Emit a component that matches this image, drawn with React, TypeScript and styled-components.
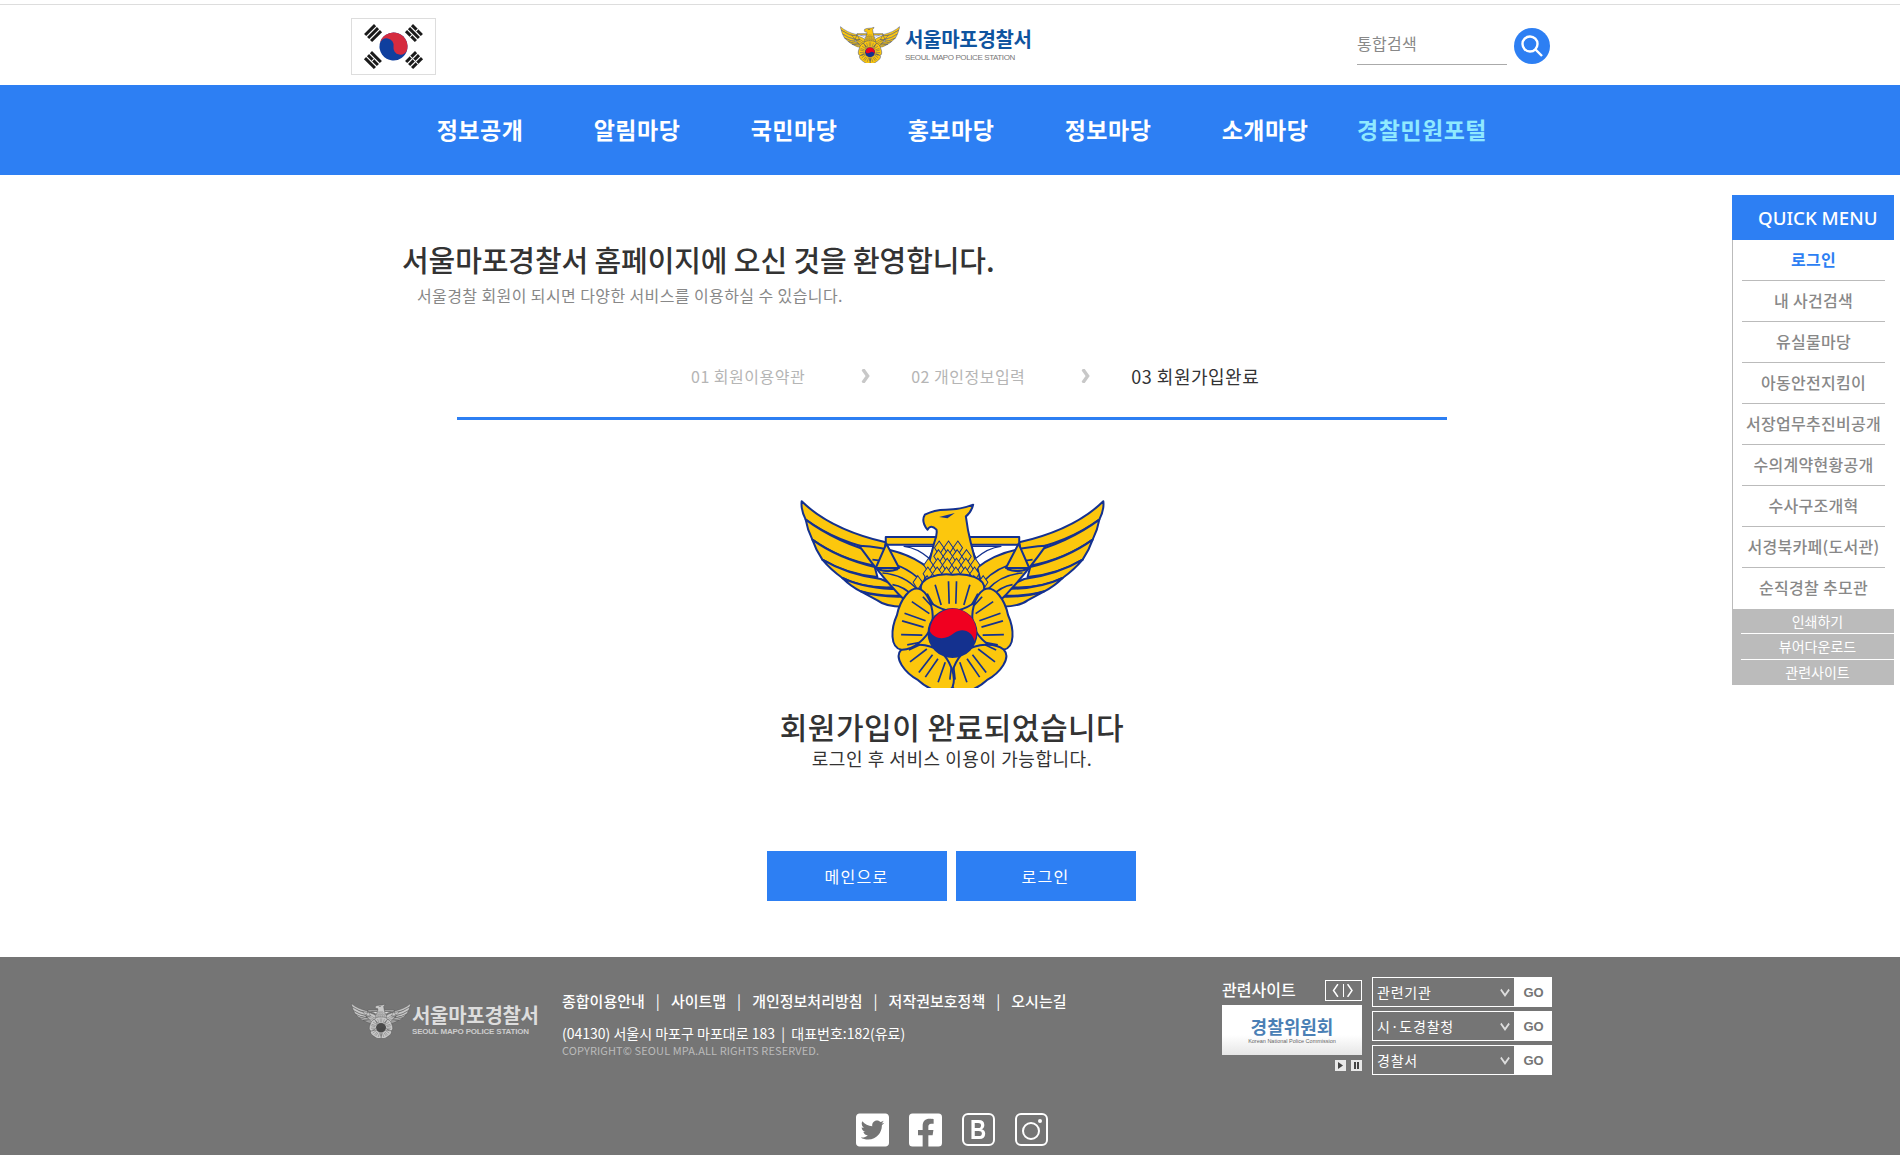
import styled, { createGlobalStyle } from 'styled-components'
import { FaTwitterSquare, FaFacebookSquare } from 'react-icons/fa'

const BLUE = '#2d7ff3'
const KR = `'Noto Sans CJK KR', 'Noto Sans', sans-serif`

const GlobalStyle = createGlobalStyle`
  html, body {
    margin: 0;
    padding: 0;
    background: #fff;
    font-family: ${KR};
  }
  * { box-sizing: border-box; }
`

const Page = styled.div`
  position: relative;
  width: 1900px;
  height: 1155px;
  overflow: hidden;
`

const Header = styled.header`
  display: flex;
  height: 85px;
  padding: 18px 0 0 351px;
  background: linear-gradient(#fff 4px, #ddd 4px, #ddd 5px, #fff 5px);
`

const FlagBox = styled.div`
  width: 85px;
  height: 57px;
  border: 1px solid #ddd;
  background: #fff;
  display: flex;
  align-items: center;
  justify-content: center;
`

const Logo = styled.div`
  display: flex;
  align-items: flex-start;
  margin: 8px 0 0 404px;
  width: 200px;
`

const LogoText = styled.div`
  margin-left: 5px;
  display: flex;
  flex-direction: column;
`

const LogoTitle = styled.span`
  font-size: 20px;
  line-height: 26px;
  font-weight: 700;
  letter-spacing: -0.3px;
  color: #0f549f;
  white-space: nowrap;
`

const LogoSub = styled.span`
  font-family: 'Liberation Sans', sans-serif;
  font-size: 8px;
  line-height: 10px;
  margin-top: 1px;
  letter-spacing: -0.4px;
  color: #777;
  white-space: nowrap;
`

const Search = styled.div`
  display: flex;
  align-items: flex-start;
  margin: 10px 0 0 317px;
`

const SearchInput = styled.input`
  width: 150px;
  height: 37px;
  padding: 0 0 6px;
  border: 0;
  border-bottom: 1px solid #aaa;
  outline: 0;
  background: transparent;
  font-family: ${KR};
  font-size: 16px;
  letter-spacing: 0.3px;
  color: #888;
  &::placeholder { color: #888; opacity: 1; }
`

const SearchButton = styled.button`
  width: 36px;
  height: 36px;
  margin-left: 7px;
  padding: 0;
  border: 0;
  border-radius: 50%;
  background: ${BLUE};
  display: flex;
  align-items: center;
  justify-content: center;
`

const Nav = styled.nav`
  display: flex;
  justify-content: center;
  align-items: center;
  height: 90px;
  padding: 0 0 2px 2px;
  background: ${BLUE};
`

const NavItem = styled.a<{ $accent?: boolean }>`
  width: 157px;
  text-align: center;
  font-size: 23px;
  font-weight: 700;
  letter-spacing: 0.5px;
  color: ${({ $accent }) => ($accent ? '#8fe9ff' : '#fff')};
  white-space: nowrap;
`

const Main = styled.main`
  height: 782px;
  padding: 64px 0 0 402px;
`

const WelcomeTitle = styled.h1`
  margin: 0;
  font-size: 29px;
  line-height: 40px;
  font-weight: 500;
  letter-spacing: -0.1px;
  color: #333;
  white-space: nowrap;
`

const WelcomeSub = styled.p`
  margin: 4px 0 0 15px;
  font-size: 16px;
  line-height: 24px;
  letter-spacing: 0.4px;
  color: #888;
`

const Content = styled.div`
  width: 990px;
  margin-left: 55px;
`

const Steps = styled.div`
  display: flex;
  align-items: center;
  height: 41px;
  margin-top: 49px;
  padding: 0 0 2px 234px;
`

const Step = styled.span<{ $active?: boolean }>`
  font-size: ${({ $active }) => ($active ? '18px' : '16px')};
  letter-spacing: 0.5px;
  color: ${({ $active }) => ($active ? '#333' : '#b5b5b5')};
  white-space: nowrap;
`

const StepArrow = styled.span`
  display: flex;
  margin: 0 40px 0 56px;
`

const StepLine = styled.div`
  height: 3px;
  margin-top: 20px;
  background: ${BLUE};
`

const Complete = styled.section`
  display: flex;
  flex-direction: column;
  align-items: center;
  margin-top: 78px;
`

const CompleteTitle = styled.h2`
  margin: 18px 0 0;
  font-size: 30px;
  line-height: 40px;
  font-weight: 500;
  letter-spacing: 0.5px;
  color: #333;
`

const CompleteSub = styled.p`
  margin: 0;
  font-size: 18px;
  line-height: 24px;
  letter-spacing: 0.55px;
  color: #333;
`

const Buttons = styled.div`
  display: flex;
  gap: 9px;
  margin: 81px 2px 0 0;
`

const Button = styled.button`
  width: 180px;
  height: 50px;
  border: 0;
  background: ${BLUE};
  color: #fff;
  font-family: ${KR};
  font-size: 16px;
  letter-spacing: 1.3px;
`

const QuickMenu = styled.aside`
  position: absolute;
  top: 195px;
  right: 6px;
  width: 162px;
`

const QuickTitle = styled.div`
  height: 45px;
  line-height: 45px;
  padding-left: 26px;
  background: ${BLUE};
  color: #fff;
  font-family: 'Noto Sans', sans-serif;
  font-size: 18.7px;
  font-weight: 500;
  white-space: nowrap;
`

const QuickList = styled.ul`
  margin: 0;
  padding: 0 9px;
  list-style: none;
  border-left: 1px solid #bbb;
`

const QuickItem = styled.li<{ $active?: boolean }>`
  height: 41px;
  line-height: 38px;
  text-align: center;
  font-size: 16px;
  letter-spacing: 0.3px;
  font-weight: ${({ $active }) => ($active ? 700 : 500)};
  color: ${({ $active }) => ($active ? BLUE : '#888')};
  border-bottom: 1px solid #bbb;
  white-space: nowrap;
  &:last-child { border-bottom: 0; }
`

const QuickTools = styled.div`
  padding-left: 9px;
  background: #bbb;
`

const QuickTool = styled.div`
  height: 25.4px;
  line-height: 24px;
  text-align: center;
  font-size: 14px;
  color: #fff;
  border-bottom: 1px solid #fff;
  &:last-child { border-bottom: 0; }
`

const Footer = styled.footer`
  position: relative;
  display: flex;
  height: 198px;
  padding: 33px 0 0 351px;
  background: #757575;
`

const FootLogo = styled.div`
  display: flex;
  align-items: flex-start;
  width: 211px;
  margin-top: 13px;
`

const FootLogoText = styled.div`
  display: flex;
  flex-direction: column;
  margin-left: 1px;
`

const FootLogoTitle = styled.span`
  font-size: 20px;
  line-height: 24px;
  font-weight: 700;
  letter-spacing: -0.3px;
  color: #ddd;
  white-space: nowrap;
`

const FootLogoSub = styled.span`
  font-family: 'Liberation Sans', sans-serif;
  font-size: 8px;
  line-height: 10px;
  font-weight: 700;
  letter-spacing: -0.2px;
  color: #ccc;
  white-space: nowrap;
`

const FootInfo = styled.div`
  width: 660px;
`

const FootLinks = styled.div`
  display: flex;
  align-items: center;
  height: 20px;
  font-size: 15px;
  font-weight: 500;
  color: #fff;
  white-space: nowrap;
`

const FootSep = styled.span`
  margin: 0 11px;
  font-weight: 400;
`

const Address = styled.div`
  margin-top: 13px;
  font-size: 14px;
  line-height: 20px;
  color: #fff;
  white-space: nowrap;
`

const Copyright = styled.div`
  font-size: 11px;
  line-height: 14px;
  letter-spacing: 0.1px;
  color: #bbb;
  white-space: nowrap;
`

const Related = styled.div`
  display: flex;
  flex-direction: column;
  width: 140px;
`

const RelatedHead = styled.div`
  display: flex;
  align-items: center;
  justify-content: space-between;
  height: 21px;
  margin-top: -10px;
`

const RelatedTitle = styled.span`
  margin-top: -4px;
  font-size: 16px;
  font-weight: 500;
  color: #fff;
`

const ArrowBox = styled.div`
  width: 37px;
  height: 21px;
  border: 1px solid #fff;
  display: flex;
  align-items: center;
  justify-content: center;
`

const Banner = styled.div`
  height: 50px;
  margin-top: 4px;
  background: linear-gradient(#fff 60%, #e6e6e6);
  display: flex;
  flex-direction: column;
  align-items: center;
  justify-content: center;
`

const BannerTitle = styled.span`
  font-size: 18px;
  line-height: 22px;
  font-weight: 700;
  color: #4a7fb5;
`

const BannerSub = styled.span`
  font-family: 'Liberation Sans', sans-serif;
  font-size: 5.5px;
  line-height: 8px;
  color: #666;
`

const BannerControls = styled.div`
  display: flex;
  justify-content: flex-end;
  gap: 5px;
  margin-top: 5px;
`

const ControlButton = styled.span`
  width: 11px;
  height: 11px;
  background: #e8e8e8;
  display: flex;
  align-items: center;
  justify-content: center;
`

const SelectColumn = styled.div`
  display: flex;
  flex-direction: column;
  gap: 4px;
  margin: -13px 0 0 10px;
`

const SelectRow = styled.div`
  display: flex;
  width: 180px;
  height: 30px;
`

const SelectWrap = styled.div`
  position: relative;
  width: 143px;
  border: 1px solid #fff;
`

const Select = styled.select`
  width: 100%;
  height: 100%;
  padding: 0 0 0 4px;
  border: 0;
  outline: 0;
  appearance: none;
  background: #757575;
  color: #fff;
  font-family: ${KR};
  font-size: 14px;
  letter-spacing: 0.8px;
`

const SelectChevron = styled.span`
  position: absolute;
  top: 8px;
  right: 4px;
  display: flex;
  pointer-events: none;
`

const GoButton = styled.button`
  width: 37px;
  padding: 0;
  border: 0;
  background: #fff;
  color: #757575;
  font-family: 'Liberation Sans', sans-serif;
  font-size: 13px;
  font-weight: 700;
`

const Social = styled.div`
  position: absolute;
  top: 156px;
  left: 856px;
  display: flex;
  gap: 20px;
  color: #fff;
`

const SocialSolid = styled.span`
  width: 33px;
  height: 33px;
  display: flex;
  align-items: center;
  justify-content: center;
  font-size: 38px;
  color: #fff;
`

const SocialOutline = styled.span`
  width: 33px;
  height: 33px;
  border: 2px solid #fff;
  border-radius: 6px;
  display: flex;
  align-items: center;
  justify-content: center;
  color: #fff;
`

const SocialLetter = styled.span`
  font-family: 'Liberation Sans', sans-serif;
  font-size: 28px;
  line-height: 1;
  font-weight: 700;
  transform: scaleX(0.8);
`

const GOLD = '#fcc70d'
const NAVY = '#14318f'

const feathers = [
  'M93 65 Q180 150 345 188 L340 216 Q200 190 105 120 Q90 90 93 65Z',
  'M105 120 Q200 190 325 222 L312 258 Q210 240 125 180 Q110 150 105 120Z',
  'M125 180 Q200 235 312 262 L320 292 Q230 285 155 240 Q135 210 125 180Z',
  'M155 240 Q230 285 330 298 L385 322 Q280 330 215 295 Q180 270 155 240Z',
  'M215 295 Q290 330 400 328 L432 345 Q340 355 270 335 Q240 320 215 295Z',
  'M270 335 Q340 358 440 348 L420 380 Q350 385 320 362Z',
]

const Wing = () => (
  <g stroke={NAVY} strokeWidth="6" strokeLinejoin="round" fill={GOLD}>
    {feathers.map((d) => (
      <path key={d} d={d} />
    ))}
    <path d="M265 198 Q400 205 472 265 L452 345 L420 380 Q345 310 265 198Z" />
    <path d="M305 240 Q400 250 452 305 M335 280 Q400 285 440 330 M365 315 Q400 320 430 352" fill="none" strokeWidth="5" />
    <path d="M345 172 H495 V195 H345Z" />
    <path d="M400 200 H490 L475 236 Q440 205 400 200Z" fill="#fff" strokeWidth="4" />
    <path d="M347 192 L315 265 H385Z" />
    <path d="M320 268 Q350 280 382 268" fill="none" strokeWidth="7" />
  </g>
)

const petalLines = ['M-10 -88 L-12 -155', 'M10 -88 L12 -155', 'M-34 -84 L-52 -145', 'M34 -84 L52 -145', 'M-58 -86 L-76 -118', 'M58 -86 L76 -118']

const Petal = ({ angle }: { angle: number }) => (
  <g transform={`rotate(${angle})`}>
    <path
      d="M0 -65 C-40 -70 -85 -95 -95 -130 C-100 -165 -45 -180 0 -175 C45 -180 100 -165 95 -130 C85 -95 40 -70 0 -65Z"
      fill={GOLD}
      stroke={NAVY}
      strokeWidth="6"
    />
    {petalLines.map((d) => (
      <path key={d} d={d} stroke={NAVY} strokeWidth="5" fill="none" />
    ))}
  </g>
)

const diamonds = [200, 226, 252, 278, 304].flatMap((y, row) => {
  const half = 40 + row * 16
  const out: string[] = []
  for (let x = -half + (row % 2 ? 14 : 0); x <= half; x += 28) {
    out.push(`M${545 + x} ${y - 16} l14 20 l-14 22 l-14 -22Z`)
  }
  return out
})

const Emblem = ({ width, height, mono }: { width: number; height: number; mono?: boolean }) => (
  <svg
    width={width}
    height={height}
    viewBox="85 55 920 570"
    preserveAspectRatio="none"
    style={mono ? { filter: 'grayscale(1) brightness(1.15) opacity(0.75)' } : undefined}
  >
    <Wing />
    <g transform="translate(1090 0) scale(-1 1)">
      <Wing />
    </g>
    <path
      d="M470 150 Q450 125 462 105 Q490 90 525 90 Q570 90 607 75 Q600 100 585 110 Q590 150 600 190 L640 345 L450 345 L490 190 Q500 165 497 150 Q480 132 470 150Z"
      fill={GOLD}
      stroke={NAVY}
      strokeWidth="6"
      strokeLinejoin="round"
    />
    <path d="M505 112 L552 100 L530 116Z" fill={NAVY} />
    {diamonds.map((d) => (
      <path key={d} d={d} fill={GOLD} stroke={NAVY} strokeWidth="3" />
    ))}
    <g transform="translate(545 460)">
      <circle r="135" fill={GOLD} />
      {[0, 72, 144, 216, 288].map((a) => (
        <Petal key={a} angle={a} />
      ))}
      <circle r="75" fill={NAVY} />
      <path d="M-68 -5 A70 70 0 1 1 66 25 C60 -5 30 -18 5 0 C-15 18 -50 25 -68 -5Z" fill="#f00020" />
    </g>
  </svg>
)

const trigrams = [
  { x: -20.5, y: -13.5, rot: -45, broken: [false, false, false] },
  { x: 20.5, y: -13.5, rot: 45, broken: [true, false, true] },
  { x: -20.5, y: 13.5, rot: 45, broken: [false, true, false] },
  { x: 20.5, y: 13.5, rot: -45, broken: [true, true, true] },
]

const KoreaFlag = () => (
  <svg width="83" height="55" viewBox="-41.5 -27.5 83 55">
    {trigrams.map((t) => (
      <g key={`${t.x}-${t.y}`} transform={`translate(${t.x} ${t.y}) rotate(${t.rot})`}>
        {t.broken.map((gap, i) => (
          <g key={i}>
            <rect x="-7" y={-5.6 + i * 4.2} width="14" height="3" fill="#1a1a1a" />
            {gap && <rect x="-0.5" y={-5.6 + i * 4.2} width="1" height="3" fill="#fff" />}
          </g>
        ))}
      </g>
    ))}
    <g transform="rotate(10)">
      <circle r="14" fill="#0f3f9e" />
      <path d="M-14 0 A14 14 0 0 1 14 0 A7 7 0 0 1 0 0 A7 7 0 0 0 -14 0Z" fill="#d52b3f" />
    </g>
  </svg>
)

const Chevron = ({
  dir,
  size = 9,
  color = '#fff',
  weight = 1.7,
}: {
  dir: 'left' | 'right' | 'down'
  size?: number
  color?: string
  weight?: number
}) => {
  const d = dir === 'left' ? 'M8 0 L2 6 L8 12' : dir === 'right' ? 'M2 0 L8 6 L2 12' : 'M1 3 L6 8 L11 3'
  return (
    <svg width={size} height={size + 4} viewBox="0 0 12 12" preserveAspectRatio="none">
      <path d={d} fill="none" stroke={color} strokeWidth={weight} />
    </svg>
  )
}

const navItems = ['정보공개', '알림마당', '국민마당', '홍보마당', '정보마당', '소개마당']
const quickItems = [
  '로그인',
  '내 사건검색',
  '유실물마당',
  '아동안전지킴이',
  '서장업무추진비공개',
  '수의계약현황공개',
  '수사구조개혁',
  '서경북카페(도서관)',
  '순직경찰 추모관',
]
const quickTools = ['인쇄하기', '뷰어다운로드', '관련사이트']
const footLinks = ['종합이용안내', '사이트맵', '개인정보처리방침', '저작권보호정책', '오시는길']
const selects = ['관련기관', '시·도경찰청', '경찰서']

export default function App() {
  return (
    <Page>
      <GlobalStyle />
      <Header>
        <FlagBox>
          <KoreaFlag />
        </FlagBox>
        <Logo>
          <Emblem width={60} height={37} />
          <LogoText>
            <LogoTitle>서울마포경찰서</LogoTitle>
            <LogoSub>SEOUL MAPO POLICE STATION</LogoSub>
          </LogoText>
        </Logo>
        <Search>
          <SearchInput placeholder="통합검색" />
          <SearchButton aria-label="검색">
            <svg width="24" height="24" viewBox="0 0 24 24" fill="none" stroke="#fff" strokeWidth="2.4">
              <circle cx="10" cy="10" r="7.5" />
              <path d="M15.5 15.5 L22 22" />
            </svg>
          </SearchButton>
        </Search>
      </Header>

      <Nav>
        {navItems.map((item) => (
          <NavItem key={item}>{item}</NavItem>
        ))}
        <NavItem $accent>경찰민원포털</NavItem>
      </Nav>

      <Main>
        <WelcomeTitle>서울마포경찰서 홈페이지에 오신 것을 환영합니다.</WelcomeTitle>
        <WelcomeSub>서울경찰 회원이 되시면 다양한 서비스를 이용하실 수 있습니다.</WelcomeSub>

        <Content>
          <Steps>
            <Step>01 회원이용약관</Step>
            <StepArrow>
              <Chevron dir="right" size={10} color="#c8c8c8" weight={3.5} />
            </StepArrow>
            <Step>02 개인정보입력</Step>
            <StepArrow>
              <Chevron dir="right" size={10} color="#c8c8c8" weight={3.5} />
            </StepArrow>
            <Step $active>03 회원가입완료</Step>
          </Steps>
          <StepLine />

          <Complete>
            <Emblem width={307} height={190} />
            <CompleteTitle>회원가입이 완료되었습니다</CompleteTitle>
            <CompleteSub>로그인 후 서비스 이용이 가능합니다.</CompleteSub>
            <Buttons>
              <Button>메인으로</Button>
              <Button>로그인</Button>
            </Buttons>
          </Complete>
        </Content>
      </Main>

      <QuickMenu>
        <QuickTitle>QUICK MENU</QuickTitle>
        <QuickList>
          {quickItems.map((item, i) => (
            <QuickItem key={item} $active={i === 0}>
              {item}
            </QuickItem>
          ))}
        </QuickList>
        <QuickTools>
          {quickTools.map((tool) => (
            <QuickTool key={tool}>{tool}</QuickTool>
          ))}
        </QuickTools>
      </QuickMenu>

      <Footer>
        <FootLogo>
          <Emblem width={60} height={35} mono />
          <FootLogoText>
            <FootLogoTitle>서울마포경찰서</FootLogoTitle>
            <FootLogoSub>SEOUL MAPO POLICE STATION</FootLogoSub>
          </FootLogoText>
        </FootLogo>

        <FootInfo>
          <FootLinks>
            {footLinks.map((link, i) => (
              <span key={link}>
                {i > 0 && <FootSep>|</FootSep>}
                {link}
              </span>
            ))}
          </FootLinks>
          <Address>(04130) 서울시 마포구 마포대로 183 &nbsp;|&nbsp; 대표번호:182(유료)</Address>
          <Copyright>COPYRIGHT© SEOUL MPA.ALL RIGHTS RESERVED.</Copyright>
        </FootInfo>

        <Related>
          <RelatedHead>
            <RelatedTitle>관련사이트</RelatedTitle>
            <ArrowBox>
              <Chevron dir="left" size={9} />
              <svg width="5" height="13" viewBox="0 0 5 13">
                <path d="M2.5 0 V13" stroke="#fff" />
              </svg>
              <Chevron dir="right" size={9} />
            </ArrowBox>
          </RelatedHead>
          <Banner>
            <BannerTitle>경찰위원회</BannerTitle>
            <BannerSub>Korean National Police Commission</BannerSub>
          </Banner>
          <BannerControls>
            <ControlButton>
              <svg width="7" height="7" viewBox="0 0 7 7">
                <path d="M1 0 L6 3.5 L1 7Z" fill="#444" />
              </svg>
            </ControlButton>
            <ControlButton>
              <svg width="7" height="7" viewBox="0 0 7 7">
                <path d="M1 0 H3 V7 H1Z M4 0 H6 V7 H4Z" fill="#444" />
              </svg>
            </ControlButton>
          </BannerControls>
        </Related>

        <SelectColumn>
          {selects.map((label) => (
            <SelectRow key={label}>
              <SelectWrap>
                <Select defaultValue={label}>
                  <option>{label}</option>
                </Select>
                <SelectChevron>
                  <Chevron dir="down" size={10} color="#ddd" weight={2} />
                </SelectChevron>
              </SelectWrap>
              <GoButton>GO</GoButton>
            </SelectRow>
          ))}
        </SelectColumn>

        <Social>
          <SocialSolid>
            <FaTwitterSquare />
          </SocialSolid>
          <SocialSolid>
            <FaFacebookSquare />
          </SocialSolid>
          <SocialOutline>
            <SocialLetter>B</SocialLetter>
          </SocialOutline>
          <SocialOutline>
            <svg width="27" height="27" viewBox="0 0 27 27" fill="none" stroke="#fff" strokeWidth="2">
              <circle cx="13" cy="15" r="8" />
              <circle cx="22" cy="5" r="2" fill="#fff" stroke="none" />
            </svg>
          </SocialOutline>
        </Social>
      </Footer>
    </Page>
  )
}
